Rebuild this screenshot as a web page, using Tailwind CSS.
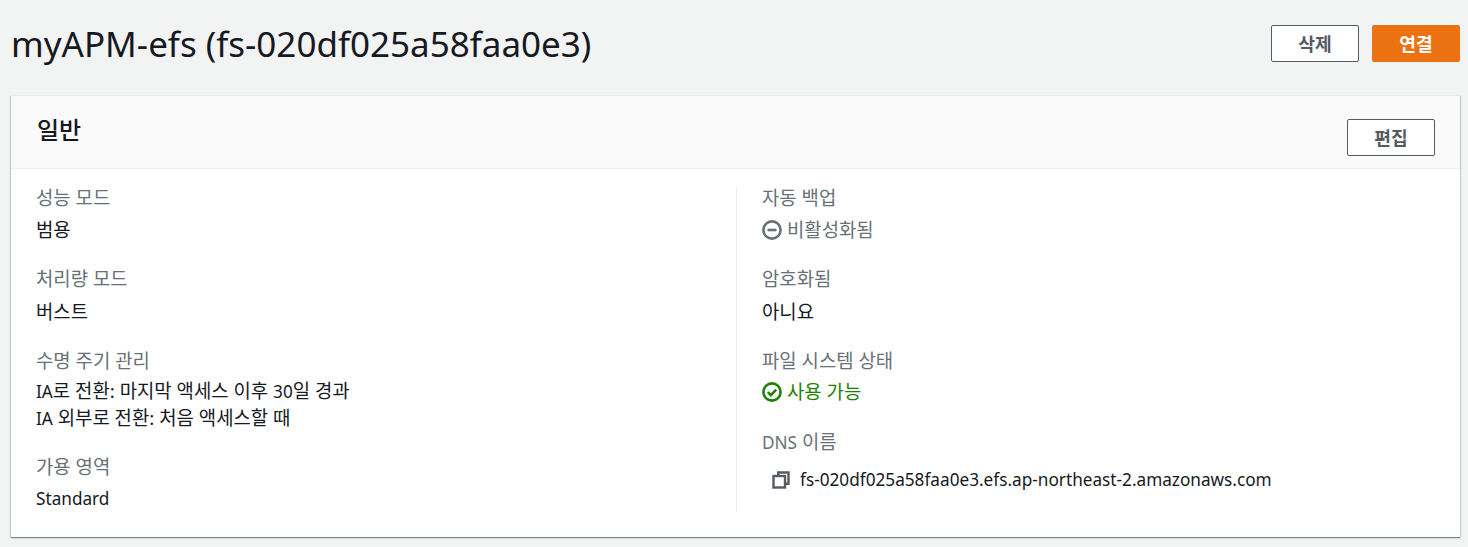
<!DOCTYPE html>
<html lang="ko">

<head>
	<meta charset="UTF-8">
	<meta name="viewport" content="width=device-width, initial-scale=1.0">
	<title>myAPM-efs</title>
	<script src="https://cdn.jsdelivr.net/npm/@tailwindcss/browser@4"></script>
</head>

<body class="bg-[#f2f3f3] h-[547px] overflow-hidden font-['Noto_Sans','Noto_Sans_CJK_KR',sans-serif] text-[#16191f] text-[18.85px] leading-[22px]">
	<div class="flex items-start justify-between pl-[11px] pr-[8px] h-[95px]">
		<h1 class="text-[35px] leading-[46px] font-normal mt-[21px]">myAPM-efs (fs-020df025a58faa0e3)</h1>
		<div class="flex gap-[13px] mt-[25px]">
			<button class="w-[88px] h-[37px] bg-white border border-[#545b64] rounded-[2px] text-[#545b64] text-[18.2px] font-bold">삭제</button>
			<button class="w-[88px] h-[37px] bg-[#ec7211] rounded-[2px] text-white text-[18.2px] font-bold">연결</button>
		</div>
	</div>

	<section class="ml-[11px] mr-[8px] h-[442px] bg-white border-t border-[#eaeded] shadow-[0_1px_1px_0_rgba(0,28,36,0.3),1px_1px_1px_0_rgba(0,28,36,0.15),-1px_1px_1px_0_rgba(0,28,36,0.15)]">
		<div class="flex items-start justify-between h-[73px] pl-[26px] pr-[25px] bg-[#fafafa] border-b border-[#eaeded]">
			<h2 class="text-[24px] leading-[32px] font-medium mt-[18px]">일반</h2>
			<button class="w-[88px] h-[37px] mt-[23px] bg-white border border-[#545b64] rounded-[2px] text-[#545b64] text-[18.2px] font-bold">편집</button>
		</div>

		<div class="grid grid-cols-[726px_1fr] pt-[18px]">
			<div class="pl-[25px] border-r border-[#eaeded] h-[325px]">
				<div class="flex flex-col gap-[27px] mt-[-0.5px]">
					<div>
						<div class="text-[#687078] mb-[10.5px]">성능 모드</div>
						<div>범용</div>
					</div>
					<div>
						<div class="text-[#687078] mb-[10.5px]">처리량 모드</div>
						<div>버스트</div>
					</div>
					<div>
						<div class="text-[#687078] mb-[10.5px]">수명 주기 관리</div>
						<div class="leading-[26px] mt-[-4px] mb-[-3.5px]"><span class="text-[17.2px]">IA</span>로 전환: 마지막 액세스 이후 <span class="text-[17.2px]">30</span>일 경과<br><span class="text-[17.2px]">IA</span> 외부로 전환: 처음 액세스할 때</div>
					</div>
					<div>
						<div class="text-[#687078] mb-[10.5px]">가용 영역</div>
						<div class="text-[17.2px]">Standard</div>
					</div>
				</div>
			</div>

			<div class="pl-[25px] flex flex-col gap-[27px] mt-[-0.5px]">
				<div>
					<div class="text-[#687078] mb-[10.5px]">자동 백업</div>
					<div class="flex items-center gap-[5px] text-[#687078]">
						<svg class="w-[20px] h-[20px]" viewBox="0 0 20 20" fill="none" stroke="#687078" stroke-width="2.6">
							<circle cx="10" cy="10" r="8.6" />
							<path d="M5.5 10h9" />
						</svg>
						<span>비활성화됨</span>
					</div>
				</div>
				<div>
					<div class="text-[#687078] mb-[10.5px]">암호화됨</div>
					<div>아니요</div>
				</div>
				<div>
					<div class="text-[#687078] mb-[10.5px]">파일 시스템 상태</div>
					<div class="flex items-center gap-[5px] text-[#1d8102] mt-[-1px]">
						<svg class="w-[20px] h-[20px]" viewBox="0 0 20 20" fill="none" stroke="#1d8102" stroke-width="2.6">
							<circle cx="10" cy="10" r="8.6" />
							<path d="M5.8 10.2l3 3 5.4-5.6" />
						</svg>
						<span>사용 가능</span>
					</div>
				</div>
				<div class="mt-[1px]">
					<div class="text-[#687078] mb-[10.5px]"><span class="text-[17.2px]">DNS</span> 이름</div>
					<div class="flex items-center gap-[10px] pl-[10px] mt-[15px]">
						<svg class="w-[18px] h-[18px]" viewBox="0 0 18 18" fill="none" stroke="#545b64" stroke-width="2.4">
							<path d="M6.2 4V1.5h10.3v11.3H14" />
							<rect x="1.5" y="5" width="11.5" height="11.5" />
						</svg>
						<span class="text-[17.2px]">fs-020df025a58faa0e3.efs.ap-northeast-2.amazonaws.com</span>
					</div>
				</div>
			</div>
		</div>
	</section>
</body>

</html>
